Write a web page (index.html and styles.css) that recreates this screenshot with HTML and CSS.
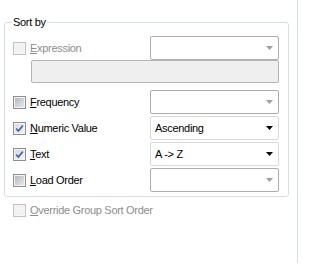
FILE: index.html
```
<!DOCTYPE html>
<html>

<head>
    <title>Sort by</title>
    <link rel="stylesheet" href="styles.css">
</head>

<body>
    <div class="page">
        <fieldset class="group">
            <legend>Sort by</legend>
            <div class="row">
                <label class="check disabled"><span class="box"></span><span><u>E</u>xpression</span></label>
                <div class="combo disabled">
                    <span class="value"></span>
                    <svg class="arrow" width="7" height="4" viewBox="0 0 7 4"><path d="M0 0h7L3.5 4z"/></svg>
                </div>
            </div>
            <div class="expr"></div>
            <div class="list">
                <div class="row">
                    <label class="check"><span class="box"></span><span><u>F</u>requency</span></label>
                    <div class="combo disabled">
                        <span class="value"></span>
                        <svg class="arrow" width="7" height="4" viewBox="0 0 7 4"><path d="M0 0h7L3.5 4z"/></svg>
                    </div>
                </div>
                <div class="row">
                    <label class="check checked"><span class="box"><svg width="9" height="9" viewBox="0 0 9 9"><path d="M1.2 4.6L3.4 7L7.8 1.6"/></svg></span><span><u>N</u>umeric Value</span></label>
                    <div class="combo">
                        <span class="value">Ascending</span>
                        <svg class="arrow" width="7" height="4" viewBox="0 0 7 4"><path d="M0 0h7L3.5 4z"/></svg>
                    </div>
                </div>
                <div class="row">
                    <label class="check checked"><span class="box"><svg width="9" height="9" viewBox="0 0 9 9"><path d="M1.2 4.6L3.4 7L7.8 1.6"/></svg></span><span><u>T</u>ext</span></label>
                    <div class="combo">
                        <span class="value">A -&gt; Z</span>
                        <svg class="arrow" width="7" height="4" viewBox="0 0 7 4"><path d="M0 0h7L3.5 4z"/></svg>
                    </div>
                </div>
                <div class="row">
                    <label class="check"><span class="box"></span><span><u>L</u>oad Order</span></label>
                    <div class="combo disabled">
                        <span class="value"></span>
                        <svg class="arrow" width="7" height="4" viewBox="0 0 7 4"><path d="M0 0h7L3.5 4z"/></svg>
                    </div>
                </div>
            </div>
        </fieldset>
        <label class="check disabled override"><span class="box"></span><span><u>O</u>verride Group Sort Order</span></label>
    </div>
</body>

</html>
```

FILE: styles.css
```
body {
    margin: 0;
    background: #fff;
    color: #000;
    font-family: "Liberation Sans", Arial, sans-serif;
    font-size: 11px;
    letter-spacing: -0.3px;
}

.page {
    width: 298px;
    height: 263px;
    box-sizing: border-box;
    padding: 15px 0 0 4px;
    border-right: 1px solid #d5dfe5;
}

.group {
    width: 285px;
    min-width: 0;
    box-sizing: border-box;
    margin: 0;
    padding: 7px 9px 4px 8px;
    border: 1px solid #d5dfe5;
    border-radius: 3px;
}

.group legend {
    margin-left: -1px;
    padding: 0 1px;
    line-height: 14px;
}

.row {
    display: grid;
    grid-template-columns: 137px 129px;
    align-items: center;
    height: 24px;
}

.list {
    display: flex;
    flex-direction: column;
    gap: 2px;
    margin-top: 7px;
}

.expr {
    height: 23px;
    margin-left: 18px;
    width: 248px;
    box-sizing: border-box;
    background: #efefef;
    border: 1px solid #b5b5b5;
    border-radius: 2px;
}

/* checkbox + label */
.check {
    display: flex;
    align-items: center;
    gap: 4px;
    height: 13px;
    line-height: 13px;
}

.check u {
    text-decoration-thickness: 1px;
}

.box {
    position: relative;
    width: 13px;
    height: 13px;
    box-sizing: border-box;
    border: 1px solid #8e8f8f;
    background: #f4f4f4;
    flex: none;
}

.box::before {
    content: "";
    position: absolute;
    left: 1px;
    top: 1px;
    width: 9px;
    height: 9px;
    background: linear-gradient(135deg, #b4b9bf, #e8e9ea);
}

.checked .box::before {
    background: linear-gradient(135deg, #d6dade, #f3f3f4);
}

.box svg {
    position: absolute;
    left: 1px;
    top: 1px;
    fill: none;
    stroke: #4763ad;
    stroke-width: 1.7;
}

.disabled {
    color: #8d8d8d;
}

.disabled .box {
    border-color: #c2c2c2;
    background: #f4f4f4;
}

.disabled .box::before {
    background: #f2f2f2;
}

.override {
    margin: 7px 0 0 9px;
}

/* drop-down */
.combo {
    display: flex;
    align-items: center;
    height: 24px;
    box-sizing: border-box;
    padding: 0 5px 0 4px;
    border: 1px solid #d9d9d9;
    border-radius: 2px;
    background: #fff;
    color: #000;
}

.combo .value {
    flex: 1;
}

.combo .arrow {
    fill: #000;
}

.combo.disabled {
    border-color: #adadad;
}

.combo.disabled .arrow {
    fill: #a0a0a0;
}
```
